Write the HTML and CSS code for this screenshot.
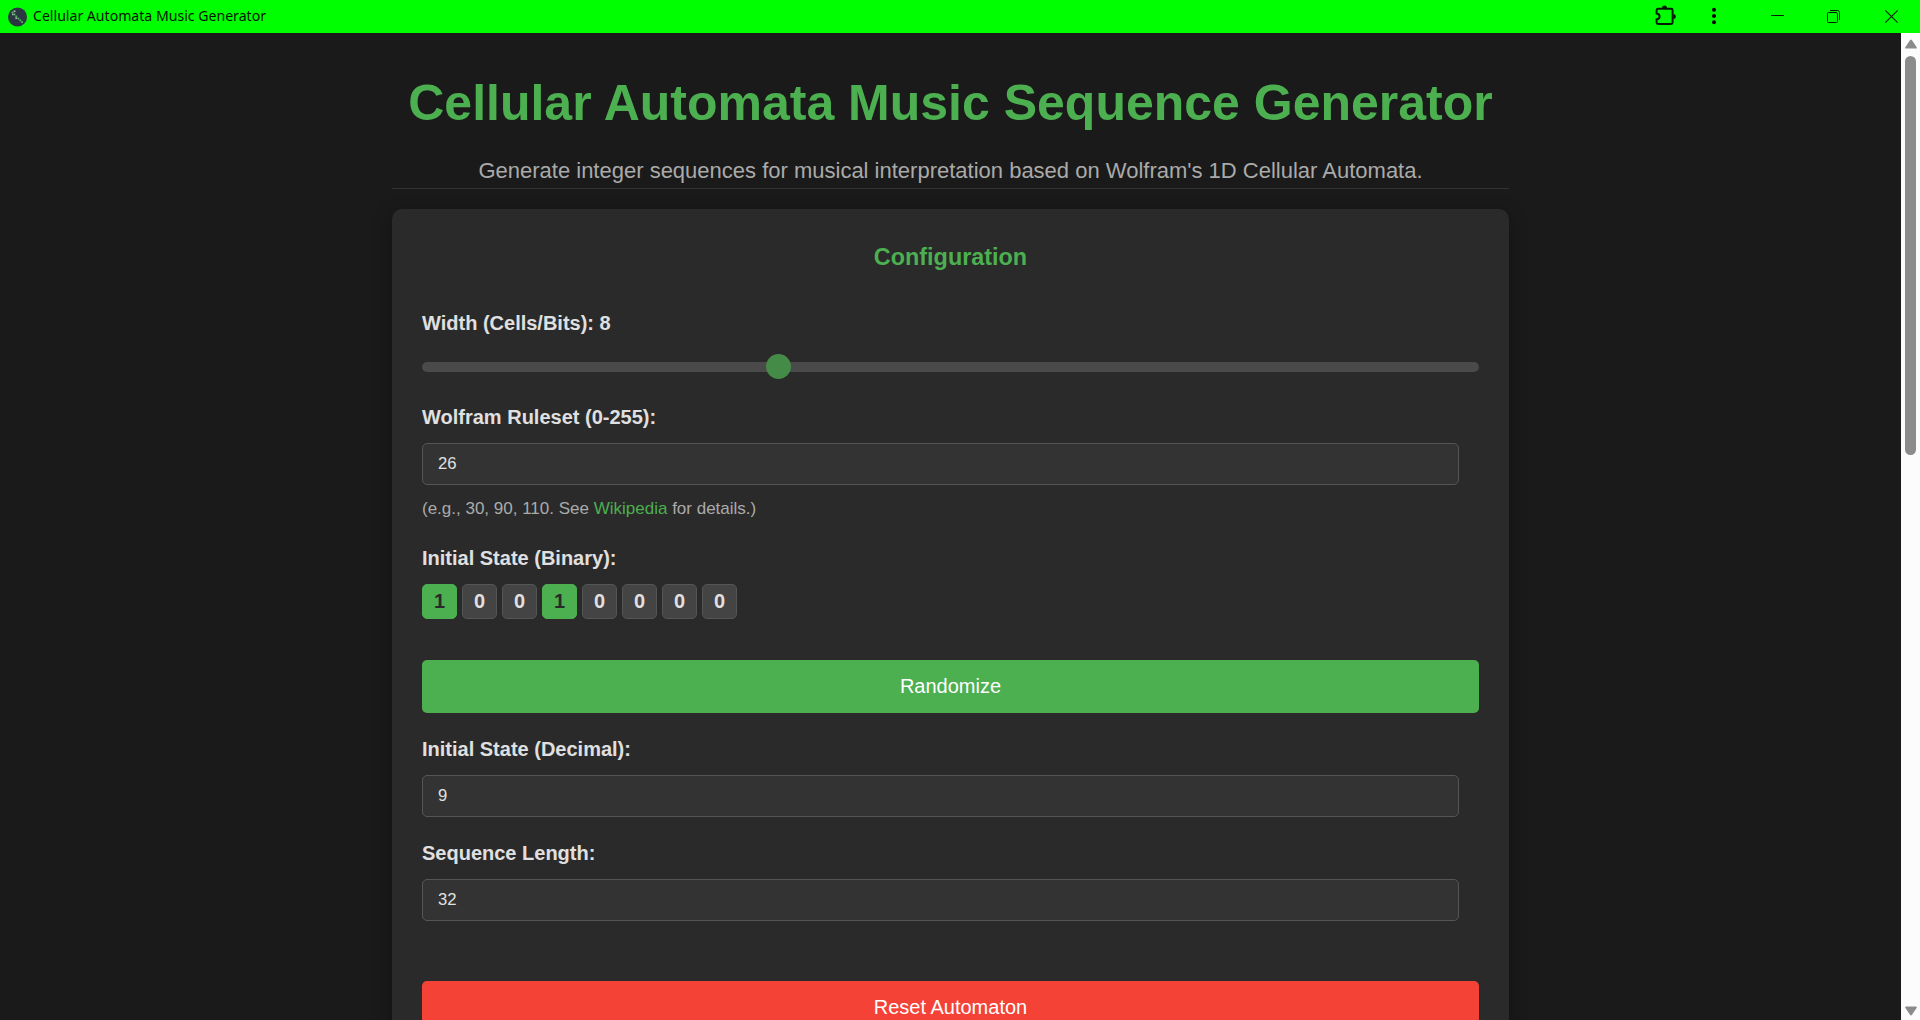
FILE: index.html
```
<!DOCTYPE html>
<html lang="en">
<head>
<meta charset="utf-8">
<title>Cellular Automata Music Generator</title>
<link rel="stylesheet" href="styles.css">
</head>
<body>
<div class="window">
  <header class="titlebar">
    <svg class="app-icon" viewBox="0 0 20 20" width="20" height="20">
      <circle cx="9.500" cy="10" r="9.500" fill="#2b3640"/>
      <g fill="#5cae6b"><rect x="3.6" y="4.6" width="1.8" height="1.8"/><rect x="5.6" y="6.6" width="1.8" height="1.8"/><rect x="7.4" y="8.6" width="1.8" height="1.8"/><rect x="9.4" y="10.6" width="1.8" height="1.8"/><rect x="11.4" y="12.4" width="1.8" height="1.8"/><rect x="13.2" y="14.2" width="1.8" height="1.8"/></g>
      <g fill="#8fc79a"><rect x="5.6" y="3.4" width="1.8" height="1.8"/><rect x="4" y="6.600" width="1.6" height="1.6"/><rect x="7.400" y="10.400" width="1.6" height="1.6"/></g>
    </svg>
    <span class="app-name">Cellular Automata Music Generator</span>
    <svg class="controls" viewBox="0 0 300 33" width="300" height="33">
      <path d="M38 8.8H51.2Q52.6 8.8 52.6 10.200V22.600Q52.600 24 51.200 24H38Q36.600 24 36.600 22.600V19.300Q39.600 18.800 39.600 16.400Q39.600 14 36.600 13.500V10.200Q36.600 8.800 38 8.800Z" fill="none" stroke="#001a00" stroke-width="2"/>
      <path d="M42 8a2.500 2.500 0 0 1 5 0zM53.300 14a2.500 2.500 0 0 1 0 5z" fill="#001a00"/>
      <circle cx="94" cy="9.700" r="2"/><circle cx="94" cy="16" r="2"/><circle cx="94" cy="22.300" r="2"/>
      <path d="M151 15.500h13" stroke="#001a00"/>
      <path d="M208.500 12.500h7.500q1.500 0 1.500 1.500v7.500q0 1-1 1h-8q-1 0-1-1v-8q0-1 1-1zM210 10.500h7.500q2 0 2 2v7.500" fill="none" stroke="#001a00"/>
      <path d="M265.300 10.300l12.400 12.400M277.700 10.300l-12.400 12.400" stroke="#001a00" stroke-width="1.100"/>
    </svg>
  </header>
  <div class="viewport">
    <main class="page">
      <header class="intro">
        <h1>Cellular Automata Music Sequence Generator</h1>
        <p>Generate integer sequences for musical interpretation based on Wolfram's 1D Cellular Automata.</p>
      </header>
      <section class="card">
        <h2>Configuration</h2>
        <div class="label">Width (Cells/Bits): 8</div>
        <div class="slider"><div class="track"></div><div class="thumb"></div></div>
        <div class="label">Wolfram Ruleset (0-255):</div>
        <div class="field">26</div>
        <p class="hint">(e.g., 30, 90, 110. See <a>Wikipedia</a> for details.)</p>
        <div class="label">Initial State (Binary):</div>
        <div class="cells">
          <span class="cell on">1</span><span class="cell">0</span><span class="cell">0</span><span class="cell on">1</span><span class="cell">0</span><span class="cell">0</span><span class="cell">0</span><span class="cell">0</span>
        </div>
        <div class="button">Randomize</div>
        <div class="label">Initial State (Decimal):</div>
        <div class="field">9</div>
        <div class="label spaced">Sequence Length:</div>
        <div class="field">32</div>
        <div class="button reset">Reset Automaton</div>
      </section>
    </main>
    <aside class="scrollbar">
      <svg viewBox="0 0 12 10" width="12" height="10"><path d="M5 1.200q1-1.600 2 0l4.600 6.800q.8 1.600-.8 1.600H1.200q-1.600 0-.8-1.600z" fill="#8b8b8b"/></svg>
      <div class="scroll-thumb"></div>
      <svg class="down" viewBox="0 0 12 10" width="12" height="10"><path d="M5 8.800q1 1.600 2 0l4.600-6.800q.8-1.600-.8-1.600H1.200q-1.600 0-.8 1.600z" fill="#8b8b8b"/></svg>
    </aside>
  </div>
</div>
</body>
</html>
```
FILE: styles.css
```
* { box-sizing: border-box; }
body { margin: 0; overflow: hidden; background: #1a1a1a; color: #e0e0e0; font-family: "Liberation Sans", Arial, sans-serif; }
h1, h2, p { margin: 0; }
.window { height: 1020px; display: flex; flex-direction: column; overflow: hidden; }
.titlebar { flex: 0 0 33px; display: flex; align-items: center; background: #00ff00; padding-left: 8px; color: #001400; }
.app-icon { margin-right: 5px; }
.app-name { font: 14.1px/20px "Noto Sans", sans-serif; margin-top: -2px; }
.controls { margin-left: auto; }
.viewport { flex: 1; min-height: 0; display: flex; overflow: hidden; }
.page { flex: 1; padding: 40px 392px 0; }
.intro { text-align: center; border-bottom: 1px solid #333; padding-bottom: 5px; margin-bottom: 20px; white-space: nowrap; }
.intro h1 { font-size: 50px; line-height: 60px; color: #4caf50; margin-bottom: 26px; }
.intro p { font-size: 22px; line-height: 24px; color: #aaa; }
.card { width: 1117px; height: 1100px; padding: 34px 30px 30px; background: #2a2a2a; border-radius: 10px; box-shadow: 0 5px 19px rgba(0, 0, 0, .3); }
.card h2 { font-size: 23.4px; line-height: 28px; color: #4caf50; text-align: center; margin-bottom: 40px; }
.label { font-size: 20px; font-weight: bold; line-height: 24px; margin-bottom: 14px; }
.slider { height: 25px; margin: 19px 0 26px; display: grid; align-items: center; }
.track { grid-area: 1 / 1; height: 10px; border-radius: 5px; background: #4a4a4a; }
.thumb { grid-area: 1 / 1; width: 25px; height: 25px; border-radius: 50%; background: #458b48; margin-left: 344px; }
.field { width: 1037px; height: 42px; border: 1px solid #555; border-radius: 5px; background: #333; font-size: 16.67px; line-height: 40px; padding: 0 15px; }
.hint { font-size: 17px; line-height: 20px; color: #aaa; margin: 14px 0 27px; }
.hint a { color: #4caf50; }
.cells { display: flex; gap: 5px; margin-bottom: 41px; }
.cell { width: 35px; height: 35px; border: 1px solid #555; border-radius: 5px; background: #444; font-size: 20px; font-weight: bold; line-height: 32px; text-align: center; }
.cell.on { background: #4caf50; border-color: #4caf50; color: #2a2a2a; }
.button { height: 53px; border-radius: 5px; background: #4caf50; color: #fff; font-size: 20px; line-height: 52px; text-align: center; margin-bottom: 24px; }
.spaced { margin-top: 24px; }
.button.reset { background: #f44336; margin-top: 60px; }
.scrollbar { flex: 0 0 19px; background: #fcfcfc; display: flex; flex-direction: column; align-items: center; padding: 6px 0 4px; }
.scroll-thumb { width: 11px; height: 399px; border-radius: 5.5px; background: #8b8b8b; margin-top: 7px; }
.down { margin-top: auto; }
```
